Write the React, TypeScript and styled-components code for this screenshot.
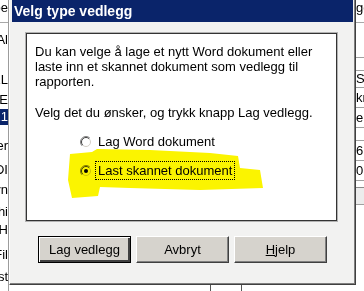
import React from "react";
import styled, { createGlobalStyle, css } from "styled-components";

const Global = createGlobalStyle`
  html, body { margin: 0; padding: 0; background: #fff; }
  body { font-family: "Liberation Sans", Arial, sans-serif; }
`;

const Screen = styled.div`
  position: relative;
  width: 364px;
  height: 291px;
  overflow: hidden;
  display: flex;
  background: #fff;
  font-family: "Liberation Sans", Arial, sans-serif;
  font-size: 13px;
  color: #000;
`;

/* ---------- background application strips ---------- */
const LeftStrip = styled.div`
  width: 8px;
  flex: none;
  border-right: 1px solid #9c9c9c;
  display: flex;
  flex-direction: column;
  overflow: hidden;
`;

const Frag = styled.div<{ $mt: number; $sel?: boolean; $align?: "start" | "end" }>`
  margin-top: ${(p) => p.$mt}px;
  height: 16px;
  line-height: 16px;
  display: flex;
  justify-content: ${(p) => (p.$align === "start" ? "flex-start" : "flex-end")};
  white-space: nowrap;
  overflow: hidden;
  flex: none;
  ${(p) =>
    p.$sel &&
    css`
      background: #0a246a;
      color: #fff;
    `}
`;

const StripRule = styled.div<{ $mt: number }>`
  margin-top: ${(p) => p.$mt}px;
  height: 1px;
  flex: none;
  background: #a8a8a8;
`;

const RightStrip = styled.div`
  width: 8px;
  flex: none;
  display: flex;
  flex-direction: column;
  overflow: hidden;
`;

const Cell = styled.div<{ $h: number }>`
  height: ${(p) => p.$h}px;
  flex: none;
  box-sizing: border-box;
  border-top: 1px solid #a0a0a0;
  line-height: ${(p) => p.$h - 1}px;
  white-space: nowrap;
  overflow: hidden;
`;

const GrayBox = styled.div`
  height: 16px;
  flex: none;
  border-top: 1px solid #8a8a8a;
  border-bottom: 1px solid #a0a0a0;
  background: #ececec;
`;

/* ---------- dialog ---------- */
const DialogColumn = styled.div`
  width: 347px;
  flex: none;
  display: flex;
  flex-direction: column;
`;

const Dialog = styled.div`
  height: 285px;
  box-sizing: border-box;
  background: #f2f2f1;
  border-left: 1px solid #ffffff;
  border-right: 1px solid #404040;
  border-bottom: 1px solid #404040;
  box-shadow: inset -1px -1px 0 #808080;
  padding: 0 2px 2px 1px;
  display: flex;
  flex-direction: column;
`;

const TitleBar = styled.div`
  height: 22px;
  flex: none;
  background: #0a246a;
  color: #fff;
  font-weight: bold;
  font-size: 14px;
  line-height: 22px;
  padding-left: 2px;
  margin-left: 1px;
  white-space: nowrap;
`;

const Body = styled.div`
  flex: 1;
  display: flex;
  flex-direction: column;
  padding: 11px 16px 0 15px;
`;

const Panel = styled.div`
  height: 188px;
  box-sizing: border-box;
  background: #fff;
  border: 1px solid #333;
  box-shadow: 0 0 0 1px rgba(60, 60, 60, 0.35);
  padding: 10px 8px 0 8px;
  line-height: 15px;
`;

const Para = styled.p<{ $mt?: number }>`
  margin: ${(p) => p.$mt ?? 0}px 0 0 0;
`;

const RadioGroup = styled.div`
  margin: 12px 0 0 45px;
  display: flex;
  flex-direction: column;
  gap: 10px;
`;

const RadioRow = styled.label`
  display: flex;
  align-items: center;
  height: 19px;
`;

const RadioLabel = styled.span<{ $focus?: boolean }>`
  margin-left: 3px;
  padding: 1px 2px;
  line-height: 15px;
  border: 1px dotted ${(p) => (p.$focus ? "#000" : "transparent")};
`;

const ButtonRow = styled.div`
  margin-top: 15px;
  display: flex;
  justify-content: center;
  gap: 5px;
  padding-left: 2px;
`;

const Button = styled.button<{ $default?: boolean }>`
  width: 93px;
  height: 27px;
  box-sizing: border-box;
  background: #d6d3cd;
  font-family: "Liberation Sans", Arial, sans-serif;
  font-size: 13px;
  color: #000;
  padding: 0;
  border: 1px solid;
  border-color: #ffffff #404040 #404040 #ffffff;
  box-shadow: inset -1px -1px 0 #808080;
  ${(p) =>
    p.$default &&
    css`
      border: 1px solid #000;
      box-shadow: inset 1px 1px 0 #ffffff, inset -2px -2px 0 #404040;
    `}
`;

const Below = styled.div`
  flex: 1;
  display: flex;
  padding-left: 201px;
`;

const BelowBox = styled.div`
  width: 30px;
  border-left: 1px solid #555;
  border-right: 1px solid #555;
`;

const Highlight = styled.svg`
  position: absolute;
  left: 0;
  top: 0;
  pointer-events: none;
  mix-blend-mode: multiply;
`;

function Radio({ checked }: { checked?: boolean }) {
  return (
    <svg width="12" height="12" viewBox="0 0 12 12" style={{ flex: "none" }}>
      <circle cx="6" cy="6" r="5" fill="#fff" />
      <path d="M2.1 9.9 A5.5 5.5 0 0 1 9.9 2.1" fill="none" stroke="#808080" strokeWidth="1" />
      <path d="M9.9 2.1 A5.5 5.5 0 0 1 2.1 9.9" fill="none" stroke="#ffffff" strokeWidth="1" />
      <path d="M2.8 9.2 A4.5 4.5 0 0 1 9.2 2.8" fill="none" stroke="#404040" strokeWidth="1" />
      <path d="M9.2 2.8 A4.5 4.5 0 0 1 2.8 9.2" fill="none" stroke="#d4d0c8" strokeWidth="1" />
      {checked && <circle cx="6" cy="6" r="2" fill="#000" />}
    </svg>
  );
}

const leftFrags: { t: string; mt: number; sel?: boolean }[] = [
  { t: "Type", mt: 0 },
];

export default function App() {
  return (
    <>
      <Global />
      <Screen>
        <LeftStrip>
          {leftFrags.map((f, i) => (
            <Frag key={i} $mt={f.mt}>
              {f.t}
            </Frag>
          ))}
          <StripRule $mt={6} />
          <Frag $mt={9}>TOTAl</Frag>
          <Frag $mt={24}>MODEL</Frag>
          <Frag $mt={4}>KODE</Frag>
          <Frag $mt={1} $sel>2021</Frag>
          <Frag $mt={13}>Leder</Frag>
          <Frag $mt={8}>PERIODI</Frag>
          <Frag $mt={4}>Navn</Frag>
          <Frag $mt={6}>Ansvarhi</Frag>
          <Frag $mt={2}>RAPPORH</Frag>
          <Frag $mt={9}>Fil</Frag>
          <Frag $mt={6}>Test</Frag>
        </LeftStrip>

        <DialogColumn>
          <Dialog>
            <TitleBar>Velg type vedlegg</TitleBar>
            <Body>
              <Panel>
                <Para>
                  Du kan velge å lage et nytt Word dokument eller laste inn et skannet
                  dokument som vedlegg til rapporten.
                </Para>
                <Para $mt={16}>Velg det du ønsker, og trykk knapp Lag vedlegg.</Para>
                <RadioGroup>
                  <RadioRow>
                    <Radio />
                    <RadioLabel>Lag Word dokument</RadioLabel>
                  </RadioRow>
                  <RadioRow>
                    <Radio checked />
                    <RadioLabel $focus>Last skannet dokument</RadioLabel>
                  </RadioRow>
                </RadioGroup>
              </Panel>
              <ButtonRow>
                <Button $default>Lag vedlegg</Button>
                <Button>Avbryt</Button>
                <Button>
                  <u>H</u>jelp
                </Button>
              </ButtonRow>
            </Body>
          </Dialog>
          <Below>
            <BelowBox />
          </Below>
        </DialogColumn>

        <RightStrip>
          <Frag $mt={0} $align="start">gest</Frag>
          <StripRule $mt={6} />
          <Cell $h={34} style={{ borderTop: "none" }} />
          <Cell $h={13} />
          <Cell $h={17}>SI</Cell>
          <Cell $h={20}>kr</Cell>
          <Cell $h={20}>en</Cell>
          <Cell $h={13} />
          <Cell $h={20}>6.</Cell>
          <Cell $h={20}>0.</Cell>
          <Cell $h={7} />
          <GrayBox />
        </RightStrip>

        <Highlight width="364" height="291" viewBox="0 0 364 291">
          <path
            d="M70 154 L92 152 L97 149 L150 150 L210 153 L238 156 L240 168 L260 170 L263 188 L200 190 L130 188 L100 187 L98 196 L72 198 L68 180 Z"
            fill="#fbf400"
          />
        </Highlight>
      </Screen>
    </>
  );
}
